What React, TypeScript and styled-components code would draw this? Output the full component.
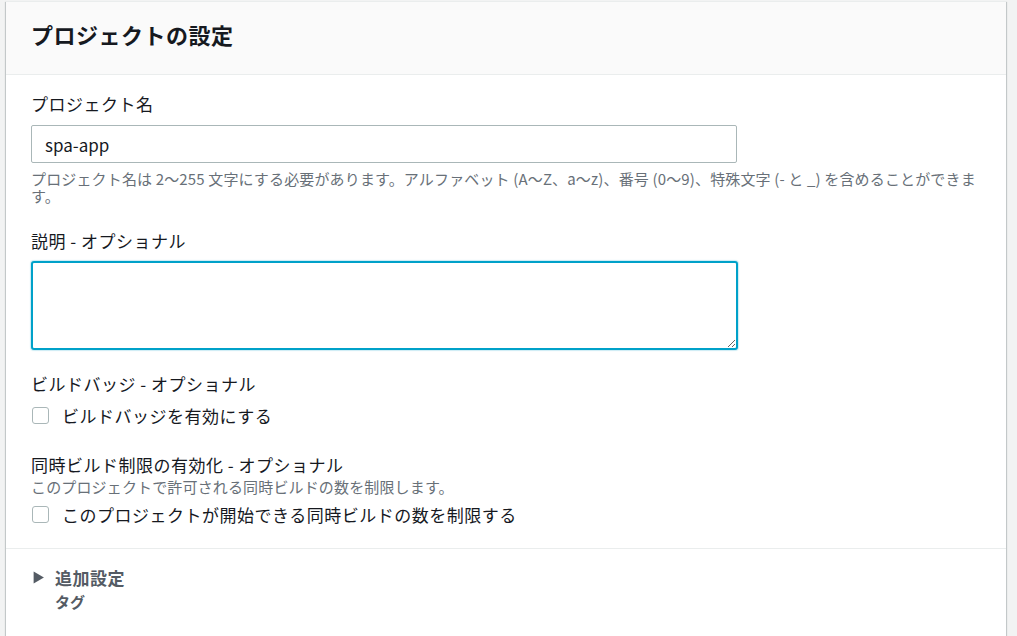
import React from "react";
import styled, { createGlobalStyle } from "styled-components";

const Global = createGlobalStyle`
  html, body { margin: 0; padding: 0; background: #f2f3f3; }
  body {
    font-family: "Noto Sans CJK JP", "Noto Sans", sans-serif;
    color: #16191f;
    overflow: hidden;
  }
  * { box-sizing: border-box; }
`;

const Page = styled.div`
  padding: 1px 11px 0 6px;
`;

const Card = styled.section`
  background: #ffffff;
  box-shadow: 0 1px 1px 0 rgba(0, 28, 36, 0.3), 1px 1px 1px 0 rgba(0, 28, 36, 0.15),
    -1px 1px 1px 0 rgba(0, 28, 36, 0.15);
  border-top: 1px solid #eaeded;
`;

const Header = styled.header`
  background: #fafafa;
  border-bottom: 1px solid #eaeded;
  padding: 17px 25px 25px;
`;

const Title = styled.h2`
  margin: 0;
  font-size: 22px;
  line-height: 30px;
  font-weight: 700;
  letter-spacing: 0.5px;
  color: #16191f;
`;

const Body = styled.div`
  padding: 17px 25px 22px;
  display: flex;
  flex-direction: column;
`;

const Field = styled.div<{ $top: number }>`
  display: flex;
  flex-direction: column;
  margin-top: ${(p) => p.$top}px;
`;

const Label = styled.label`
  font-size: 17px;
  line-height: 24px;
  letter-spacing: 0.5px;
  color: #16191f;
`;

const Help = styled.div<{ $gap?: number }>`
  font-size: 15px;
  line-height: 17px;
  letter-spacing: 0.15px;
  color: #687078;
  margin-top: ${(p) => p.$gap ?? 0}px;
`;

const Input = styled.input`
  margin-top: 9px;
  width: 706px;
  height: 38px;
  border: 1px solid #aab7b8;
  border-radius: 2px;
  padding: 0 13px;
  font-family: inherit;
  font-size: 17px;
  color: #16191f;
  background: #fff;
  outline: none;
`;

const TextArea = styled.textarea`
  margin-top: 8px;
  width: 707px;
  height: 89px;
  border: 2px solid #00a1c9;
  border-radius: 3px;
  box-shadow: 0 0 1px 1px rgba(0, 161, 201, 0.2);
  padding: 6px 12px;
  font-family: inherit;
  font-size: 17px;
  outline: none;
  resize: both;
`;

const CheckRow = styled.label<{ $top: number }>`
  display: flex;
  align-items: center;
  gap: 13px;
  margin-top: ${(p) => p.$top}px;
  height: 24px;
  font-size: 17px;
  letter-spacing: 0.5px;
  color: #16191f;
  padding-left: 1px;
`;

const Box = styled.span`
  width: 17px;
  height: 17px;
  border: 1px solid #aab7b8;
  border-radius: 3px;
  background: #fff;
  flex: none;
`;

const Divider = styled.hr`
  margin: 0;
  border: none;
  border-top: 1px solid #eaeded;
`;

const Footer = styled.div`
  padding: 16px 25px 40px;
`;

const Expander = styled.div`
  display: flex;
  align-items: center;
  gap: 10px;
  height: 24px;
  font-size: 17px;
  letter-spacing: 0.5px;
  font-weight: 700;
  color: #545b64;
`;

const Caret = styled.svg`
  width: 13px;
  height: 13px;
  margin-left: 1px;
  flex: none;
`;

const Sub = styled.div`
  margin-top: 1px;
  padding-left: 24px;
  font-size: 15px;
  line-height: 24px;
  font-weight: 700;
  color: #545b64;
`;

export default function App() {
  return (
    <>
      <Global />
      <Page>
        <Card>
          <Header>
            <Title>プロジェクトの設定</Title>
          </Header>
          <Body>
            <Field $top={0}>
              <Label>プロジェクト名</Label>
              <Input defaultValue="spa-app" />
              <Help $gap={7}>
                プロジェクト名は 2〜255 文字にする必要があります。アルファベット (A〜Z、a〜z)、番号 (0〜9)、特殊文字 (- と _) を含めることができます。
              </Help>
            </Field>
            <Field $top={25}>
              <Label>説明 - オプショナル</Label>
              <TextArea />
            </Field>
            <Field $top={22}>
              <Label>ビルドバッジ - オプショナル</Label>
              <CheckRow $top={7}>
                <Box />
                ビルドバッジを有効にする
              </CheckRow>
            </Field>
            <Field $top={26}>
              <Label>同時ビルド制限の有効化 - オプショナル</Label>
              <Help $gap={1}>このプロジェクトで許可される同時ビルドの数を制限します。</Help>
              <CheckRow $top={7}>
                <Box />
                このプロジェクトが開始できる同時ビルドの数を制限する
              </CheckRow>
            </Field>
          </Body>
          <Divider />
          <Footer>
            <Expander>
              <Caret viewBox="0 0 12 12">
                <path d="M1.5 0.5 L11 6 L1.5 11.5 Z" fill="#545b64" />
              </Caret>
              追加設定
            </Expander>
            <Sub>タグ</Sub>
          </Footer>
        </Card>
      </Page>
    </>
  );
}
